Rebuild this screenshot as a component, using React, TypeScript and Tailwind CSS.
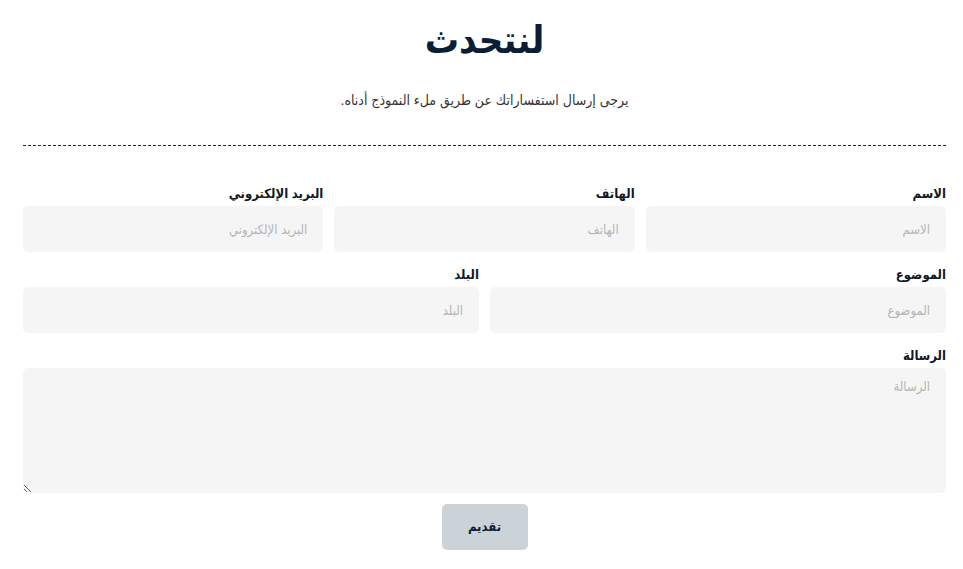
import React from 'react';

const font = { fontFamily: '"Liberation Sans", "DejaVu Sans Condensed", "DejaVu Sans", Arial, sans-serif' };

interface FieldProps {
  label: string;
  className?: string;
}

const Field: React.FC<FieldProps> = ({ label, className }) => (
  <div className={`flex flex-col ${className || ''}`}>
    <label className="text-[13px] font-bold text-[#111827] leading-[13px] mb-[6px]">{label}</label>
    <input
      placeholder={label}
      className="h-[46px] w-full rounded-[5px] bg-[#f5f5f5] px-4 text-[13px] text-[#333] placeholder:text-[#b5b5b5] outline-none"
    />
  </div>
);

export default function App() {
  return (
    <div dir="rtl" style={font} className="bg-white w-full min-h-[569px] pr-[17px] pt-[18px]">
      <div className="w-[923px]">
        <h1 className="text-center text-[38px] font-bold leading-[44px] text-[#0c1e35]">لنتحدث</h1>
        <p className="mt-[28px] text-center text-[14px] text-[#333]">يرجى إرسال استفساراتك عن طريق ملء النموذج أدناه.</p>
        <div className="mt-[34px] border-t border-dashed border-[#222]" />
        <form className="mt-[41px] flex flex-col">
          <div className="grid grid-cols-3 gap-[11px]">
            <Field label="الاسم" />
            <Field label="الهاتف" />
            <Field label="البريد الإلكتروني" />
          </div>
          <div className="mt-[16px] grid grid-cols-2 gap-[11px]">
            <Field label="الموضوع" />
            <Field label="البلد" />
          </div>
          <div className="mt-[16px] flex flex-col">
            <label className="text-[13px] font-bold text-[#111827] leading-[13px] mb-[6px]">الرسالة</label>
            <textarea
              placeholder="الرسالة"
              className="h-[125px] w-full rounded-[5px] bg-[#f5f5f5] px-4 py-[9px] text-[13px] placeholder:text-[#b5b5b5] outline-none"
            />
          </div>
          <div className="mt-[11px] flex justify-center">
            <button
              type="button"
              className="h-[46px] w-[86px] rounded-[5px] bg-[#ccd3d8] text-[13px] font-bold text-[#0c1e35]"
            >
              تقديم
            </button>
          </div>
        </form>
      </div>
    </div>
  );
}
